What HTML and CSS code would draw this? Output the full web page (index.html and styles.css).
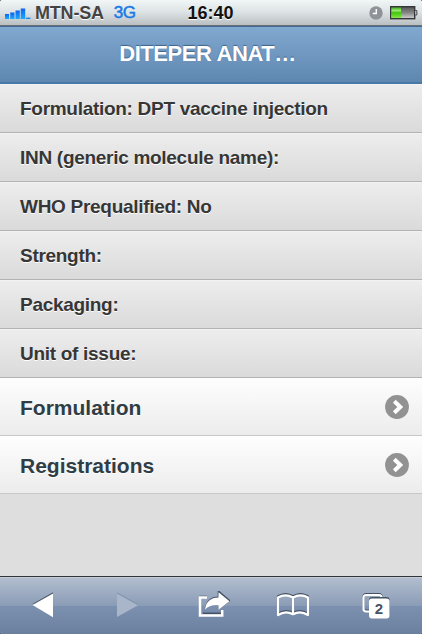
FILE: index.html
```html
<!DOCTYPE html>
<html lang="en">
<head>
<meta charset="utf-8">
<title>DITEPER ANAT…</title>
<link rel="stylesheet" href="styles.css">
</head>
<body>
<div class="phone">
  <div class="status">
    <div class="carrier">
      <svg class="signal" width="26" height="12" viewBox="0 0 26 12">
        <defs><linearGradient id="sig" x1="0" y1="0" x2="0" y2="1"><stop offset="0" stop-color="#0d63ee"/><stop offset="1" stop-color="#1caafc"/></linearGradient></defs>
        <g fill="url(#sig)"><rect x="0" y="6" width="4" height="5"/><rect x="5.200" y="4.500" width="4.300" height="6.500"/><rect x="10.500" y="2.500" width="4.300" height="8.500"/><rect x="15.700" y="0.500" width="4.500" height="10.500"/><rect x="21" y="9.700" width="4.500" height="1.300"/></g>
      </svg>
      <span class="name">MTN-SA</span>
      <span class="network">3G</span>
    </div>
    <div class="time">16:40</div>
    <div class="indicators">
      <svg width="14" height="14" viewBox="0 0 14 14"><circle cx="7" cy="7" r="6.700" fill="#8d9397"/><path d="M7.300 3v4.500H3.700" fill="none" stroke="#fff" stroke-width="1.500"/></svg>
      <svg width="28" height="14" viewBox="0 0 28 14">
        <defs>
          <linearGradient id="cell" x1="0" y1="0" x2="0" y2="1"><stop offset="0" stop-color="#555"/><stop offset=".5" stop-color="#858585"/><stop offset="1" stop-color="#d5d3d3"/></linearGradient>
          <linearGradient id="charge" x1="0" y1="0" x2="0" y2="1"><stop offset="0" stop-color="#3fae16"/><stop offset=".3" stop-color="#9be875"/><stop offset=".5" stop-color="#42c510"/><stop offset="1" stop-color="#79e837"/></linearGradient>
        </defs>
        <rect x=".7" y=".7" width="24" height="12" fill="url(#cell)" stroke="#34363a" stroke-width="1.400"/>
        <rect x="1.400" y="1.500" width="9.600" height="10.300" fill="url(#charge)"/>
        <path d="M25.200 4.500h1.700v4.500h-1.700" fill="#bbb" stroke="#4b4d52"/>
      </svg>
    </div>
  </div>
  <header class="header"><h1>DITEPER ANAT…</h1></header>
  <main class="content">
    <ul class="list">
      <li class="detail"><span>Formulation: DPT vaccine injection</span></li>
      <li class="detail"><span>INN (generic molecule name):</span></li>
      <li class="detail"><span>WHO Prequalified: No</span></li>
      <li class="detail"><span>Strength:</span></li>
      <li class="detail"><span>Packaging:</span></li>
      <li class="detail"><span>Unit of issue:</span></li>
      <li class="link"><span>Formulation</span>
        <svg width="24" height="24" viewBox="0 0 24 24"><circle cx="12" cy="12" r="11.900" fill="#929292"/><path d="M9.300 6.200l6 5.800-6 5.800" fill="none" stroke="#fff" stroke-width="4"/></svg></li>
      <li class="link"><span>Registrations</span>
        <svg width="24" height="24" viewBox="0 0 24 24"><circle cx="12" cy="12" r="11.900" fill="#929292"/><path d="M9.300 6.200l6 5.800-6 5.800" fill="none" stroke="#fff" stroke-width="4"/></svg></li>
    </ul>
  </main>
  <nav class="toolbar">
    <svg class="back" width="22" height="26" viewBox="0 0 22 26"><path d="M21 .2L.5 12 21 24z" fill="#465366"/><path d="M21 1.500L.5 13 21 25.200z" fill="#fff"/></svg>
    <svg class="forward" width="22" height="26" viewBox="0 0 22 26"><path d="M0 .2L21 12 0 24z" fill="#8293aa"/><path d="M0 1.500L21 13.200 0 25z" fill="#a9b6c9"/></svg>
    <svg class="share" width="32" height="28" viewBox="0 0 32 28">
      <path d="M9 5.500H2V24.500M5 22.300H23M20.500 5.500V.2L31.500 9.500 20.500 17.700" fill="none" stroke="#465366" stroke-width="1.600"/>
      <path d="M7 17.500C8 8.500 14 5.500 20.500 5.500V.2L31.500 9.500 20.500 17.700V13.200C15 12.500 10.500 14 7 17.500z" fill="#465366"/>
      <path d="M9 6.500H2V24.500H24.200V19" fill="none" stroke="#fff" stroke-width="2.500"/><path d="M7 18.500C8 9.500 14 6.500 20.500 6.500V1.200L31.500 10.200 20.500 18.700V14.200C15 13.500 10.500 15 7 18.500z" fill="#fff"/>
    </svg>
    <svg class="book" width="34" height="26" viewBox="0 0 34 26" fill="none" stroke-width="2.200" stroke-linejoin="round">
      <path stroke="#465366" d="M2 3.200Q9.500-1 17 3.200Q24.500-1 32 3.200V20.700Q24.500 15.700 17 20Q9.500 15.700 2 20.700zM17 3.500V20"/>
      <path stroke="#fff" d="M2 4.500Q9.500.3 17 4.500Q24.500.3 32 4.500V22Q24.500 17 17 21.200Q9.500 17 2 22zM17 4.500V21.500"/>
    </svg>
    <div class="tabs">
      <svg width="28" height="27" viewBox="0 0 28 27"><rect x="1.500" y="2" width="18" height="16.500" rx="2.500" fill="none" stroke="#465366" stroke-width="2.200"/><rect x="1.500" y="3" width="18" height="16.500" rx="2.500" fill="none" stroke="#fff" stroke-width="2.200"/><rect x="7" y="5" width="20.500" height="20" rx="3" fill="#465366"/><rect x="7" y="6.500" width="20.500" height="20" rx="3" fill="#fff"/></svg>
      <span class="count">2</span>
    </div>
  </nav>
</div>
</body>
</html>
```
FILE: styles.css
```css
* { box-sizing: border-box; }
body { margin: 0; font-family: "Liberation Sans", Arial, sans-serif; font-weight: bold; background: #000; }
.phone { width: 422px; height: 634px; display: flex; flex-direction: column; overflow: hidden; border-radius: 2px; background: #dedede; }
.status { height: 26px; flex: none; display: grid; grid-template-columns: 1fr auto 1fr; align-items: center; padding: 0 4px 0 5px; background: linear-gradient(#f1f6f7, #dce1e3 50%, #babfc1); border-bottom: 1px solid #686e73; font-size: 18px; line-height: 24px; }
.carrier { display: flex; align-items: center; }
.signal { margin-top: 3px; }
.name { margin-left: 4px; color: #444; white-space: nowrap; letter-spacing: -.2px; text-shadow: 0 1px 0 #fff; }
.network { margin-left: 10px; color: #1779e8; font-size: 17px; font-weight: normal; letter-spacing: -.6px; -webkit-text-stroke: .5px #1779e8; }
.time { margin-left: -2px; color: #111; text-shadow: 0 1px 0 #fff; }
.indicators { display: flex; justify-content: flex-end; align-items: center; gap: 7px; }
.header { height: 58px; flex: none; border-top: 1px solid #456a92; border-bottom: 2px solid #4878a8; background: linear-gradient(#81a8cf, #5e87b0); text-align: center; padding-right: 7px; }
h1 { margin: 0; color: #fff; font-size: 22px; letter-spacing: -.42px; line-height: 54px; text-shadow: 0 -1px 1px #3e6790; }
.content { flex: 1; min-height: 0; background: #dedede; }
.list { list-style: none; margin: 0; padding: 0; }
.detail { height: 49px; display: flex; align-items: center; padding: 1px 20px 0; border-top: 1px solid #f2f2f2; border-bottom: 1px solid #b3b3b3; background: linear-gradient(#ededed, #dadada); color: #363636; font-size: 19px; letter-spacing: -.29px; text-shadow: 0 1px 0 #fff; white-space: nowrap; }
.link { height: 58px; display: flex; align-items: center; justify-content: space-between; padding: 1px 13px 0 20px; border-bottom: 1px solid #c8c8c8; background: linear-gradient(#fefefe, #ececec); color: #2f3e46; font-size: 21px; text-shadow: 0 1px 0 #fff; }
.link span { padding-top: 1px; }
.toolbar { height: 58px; flex: none; border-top: 1px solid #313439; box-shadow: inset 0 1px #c4ccd8; background: linear-gradient(#b3bfcf, #8b9cb6 50%, #7c91b0 51%, #6b809f); display: flex; align-items: flex-start; padding: 15px 33px 0 32px; }
.toolbar > * { flex: none; }
.forward { margin-left: 63px; }
.share { margin: -1px 0 0 59px; }
.book { margin: 1px 0 0 46px; }
.tabs { margin: 0 0 0 52px; position: relative; width: 28px; height: 28px; }
.tabs svg { display: block; }
.count { position: absolute; left: 7px; top: 7px; width: 20px; text-align: center; font-size: 15px; line-height: 20px; color: #465366; }
```
